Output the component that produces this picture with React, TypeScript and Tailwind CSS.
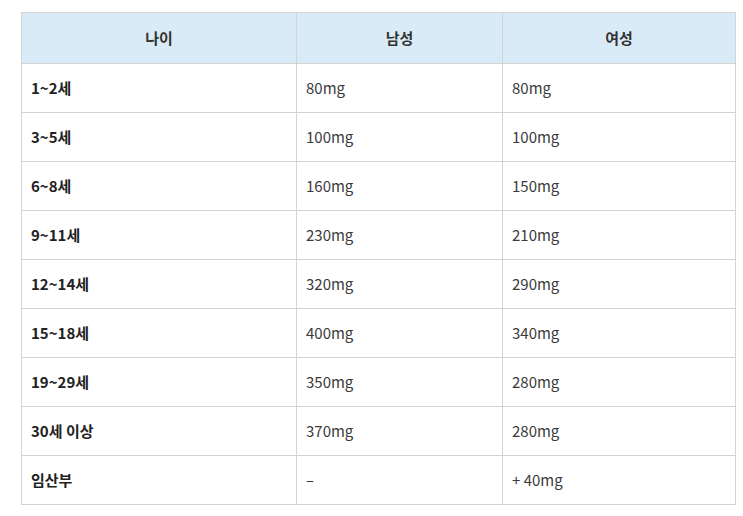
const rows: [string, string, string][] = [
  ['1~2세', '80mg', '80mg'],
  ['3~5세', '100mg', '100mg'],
  ['6~8세', '160mg', '150mg'],
  ['9~11세', '230mg', '210mg'],
  ['12~14세', '320mg', '290mg'],
  ['15~18세', '400mg', '340mg'],
  ['19~29세', '350mg', '280mg'],
  ['30세 이상', '370mg', '280mg'],
  ['임산부', '–', '+ 40mg'],
]

export default function App() {
  return (
    <div className="min-h-[516px] bg-white pt-[12px] pl-[21px] font-['Noto_Sans_CJK_KR','Noto_Sans',sans-serif] text-[15px]">
      <table className="w-[714px] table-fixed border-collapse">
        <colgroup>
          <col className="w-[275px]" />
          <col className="w-[206px]" />
          <col className="w-[233px]" />
        </colgroup>
        <thead>
          <tr className="h-[51px] bg-[#d9ebf6]">
            <th className="border border-[#d3d3d3] text-center font-semibold text-[#333]">나이</th>
            <th className="border border-[#d3d3d3] text-center font-semibold text-[#333]">남성</th>
            <th className="border border-[#d3d3d3] text-center font-semibold text-[#333]">여성</th>
          </tr>
        </thead>
        <tbody>
          {rows.map(([age, male, female]) => (
            <tr key={age} className="h-[49px]">
              <td className="border border-[#d3d3d3] px-[9px] font-bold text-[#222]">{age}</td>
              <td className="border border-[#d3d3d3] px-[9px] text-[#3a3a3a]">{male}</td>
              <td className="border border-[#d3d3d3] px-[9px] text-[#3a3a3a]">{female}</td>
            </tr>
          ))}
        </tbody>
      </table>
    </div>
  )
}
